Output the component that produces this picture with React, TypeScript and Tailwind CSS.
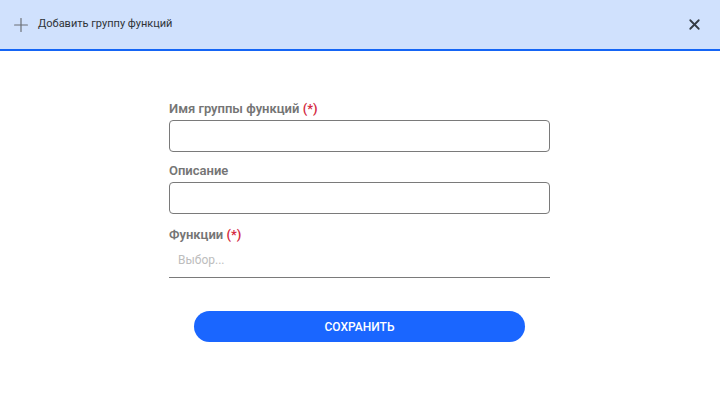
import { X, Plus } from 'lucide-react';

export default function App() {
  return (
    <div className="w-[720px] h-[403px] bg-white font-['Roboto',sans-serif]">
      {/* Header */}
      <div className="h-[51px] bg-[#d0e1fd] border-b-2 border-[#1565f5] flex items-center pl-[10px] pr-[17px]">
        <Plus className="w-[22px] h-[22px] text-[#6b6f75]" strokeWidth={1.3} />
        <span className="ml-[6px] text-[11px] text-[#2f3338]">Добавить группу функций</span>
        <button className="ml-auto text-[#333a44]">
          <X className="w-[17px] h-[17px]" strokeWidth={2.5} />
        </button>
      </div>

      {/* Form */}
      <div className="w-[381px] pt-[50px] ml-[169px]">
        <label className="block text-[13px] font-semibold text-[#757575] leading-[16px]">
          Имя группы функций <span className="text-[#d42a3f]">(*)</span>
        </label>
        <input className="mt-[3px] block w-full h-[32px] border border-[#7a7a7a] rounded-[4px]" />

        <label className="block mt-[11px] text-[13px] font-semibold text-[#757575] leading-[16px]">
          Описание
        </label>
        <input className="mt-[3px] block w-full h-[32px] border border-[#7a7a7a] rounded-[4px]" />

        <label className="block mt-[13px] text-[13px] font-semibold text-[#757575] leading-[16px]">
          Функции <span className="text-[#d42a3f]">(*)</span>
        </label>
        <div className="mt-[8px] h-[27px] border-b border-[#7a7a7a] flex items-start pl-[9px] text-[12px] text-[#bdbdbd]">
          Выбор...
        </div>

        <div className="flex justify-center mt-[33px]">
          <button className="w-[331px] h-[31px] rounded-full bg-[#1a66ff] text-white text-[12px] font-medium">
            СОХРАНИТЬ
          </button>
        </div>
      </div>
    </div>
  );
}
